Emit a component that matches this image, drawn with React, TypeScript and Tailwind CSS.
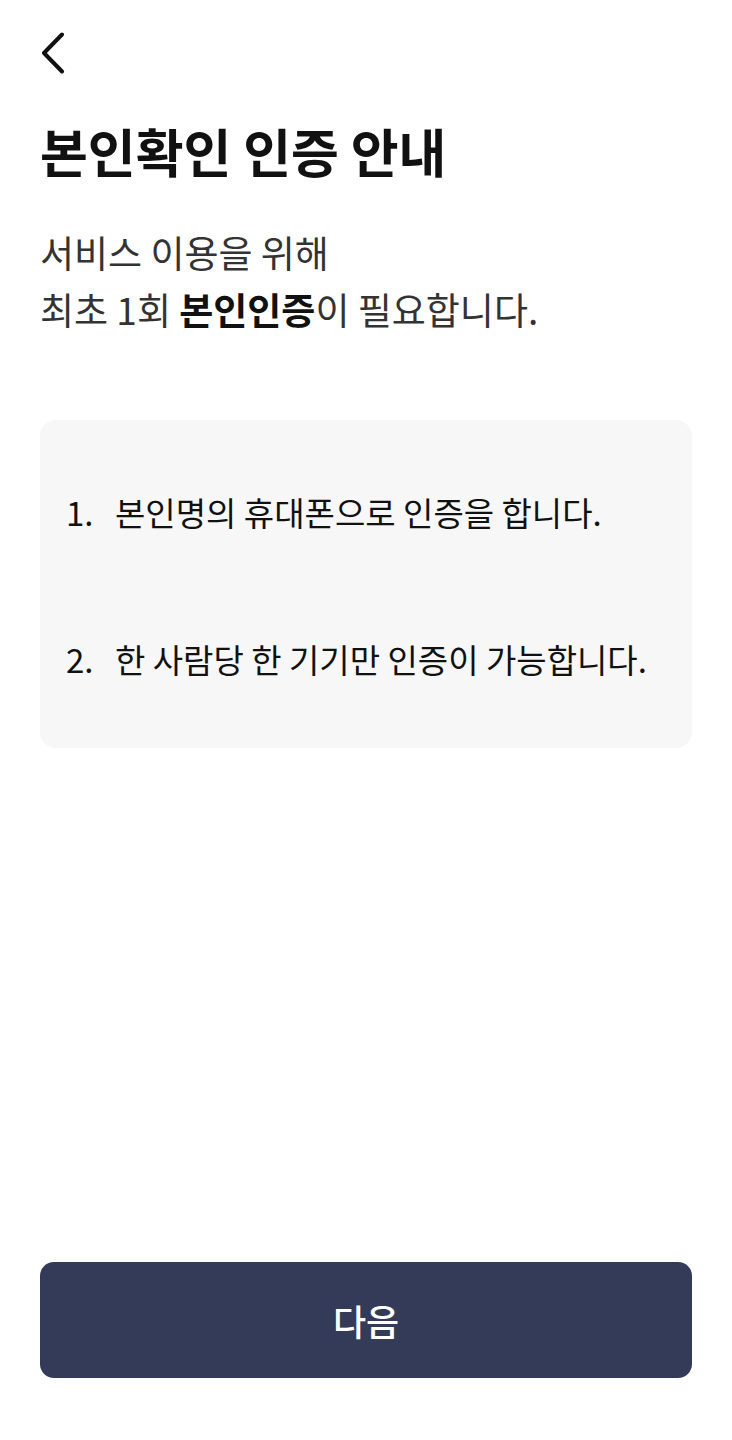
const guides = [
  { no: "1.", text: "본인명의 휴대폰으로 인증을 합니다." },
  { no: "2.", text: "한 사람당 한 기기만 인증이 가능합니다." },
];

function BackButton() {
  return (
    <button className="w-[30px] h-[44px] flex items-center justify-start" aria-label="back">
      <svg width="26" height="42" viewBox="0 0 26 42" fill="none">
        <path
          d="M22 2.5 L4 21 L22 39.5"
          stroke="#111111"
          strokeWidth="4"
          strokeLinecap="round"
          strokeLinejoin="round"
        />
      </svg>
    </button>
  );
}

export default function App() {
  return (
    <div
      className="min-h-[1440px] w-full bg-white flex flex-col px-10"
      style={{ fontFamily: '"Noto Sans CJK KR", "Noto Sans", sans-serif' }}
    >
      <div className="pt-[31px]">
        <BackButton />
      </div>

      <h1 className="mt-[46px] text-[52px] leading-[60px] font-bold text-[#111]">
        본인확인 인증 안내
      </h1>

      <p className="mt-[43px] text-[37px] leading-[57px] text-[#333]">
        서비스 이용을 위해
        <br />
        최초 1회 <span className="font-bold text-[#111]">본인인증</span>이 필요합니다.
      </p>

      <div className="mt-[82px] rounded-2xl bg-[#f7f7f7] pt-[69px] pb-[66px] pl-[26px] pr-4 flex flex-col gap-[101px]">
        {guides.map((g) => (
          <div key={g.no} className="flex items-center text-[33px] leading-[46px] text-[#111]">
            <span className="w-[49px] shrink-0">{g.no}</span>
            <span>{g.text}</span>
          </div>
        ))}
      </div>

      <button className="mt-auto mb-[62px] h-[116px] w-full rounded-[14px] bg-[#333b59] text-white text-[36px] font-medium">
        다음
      </button>
    </div>
  );
}
